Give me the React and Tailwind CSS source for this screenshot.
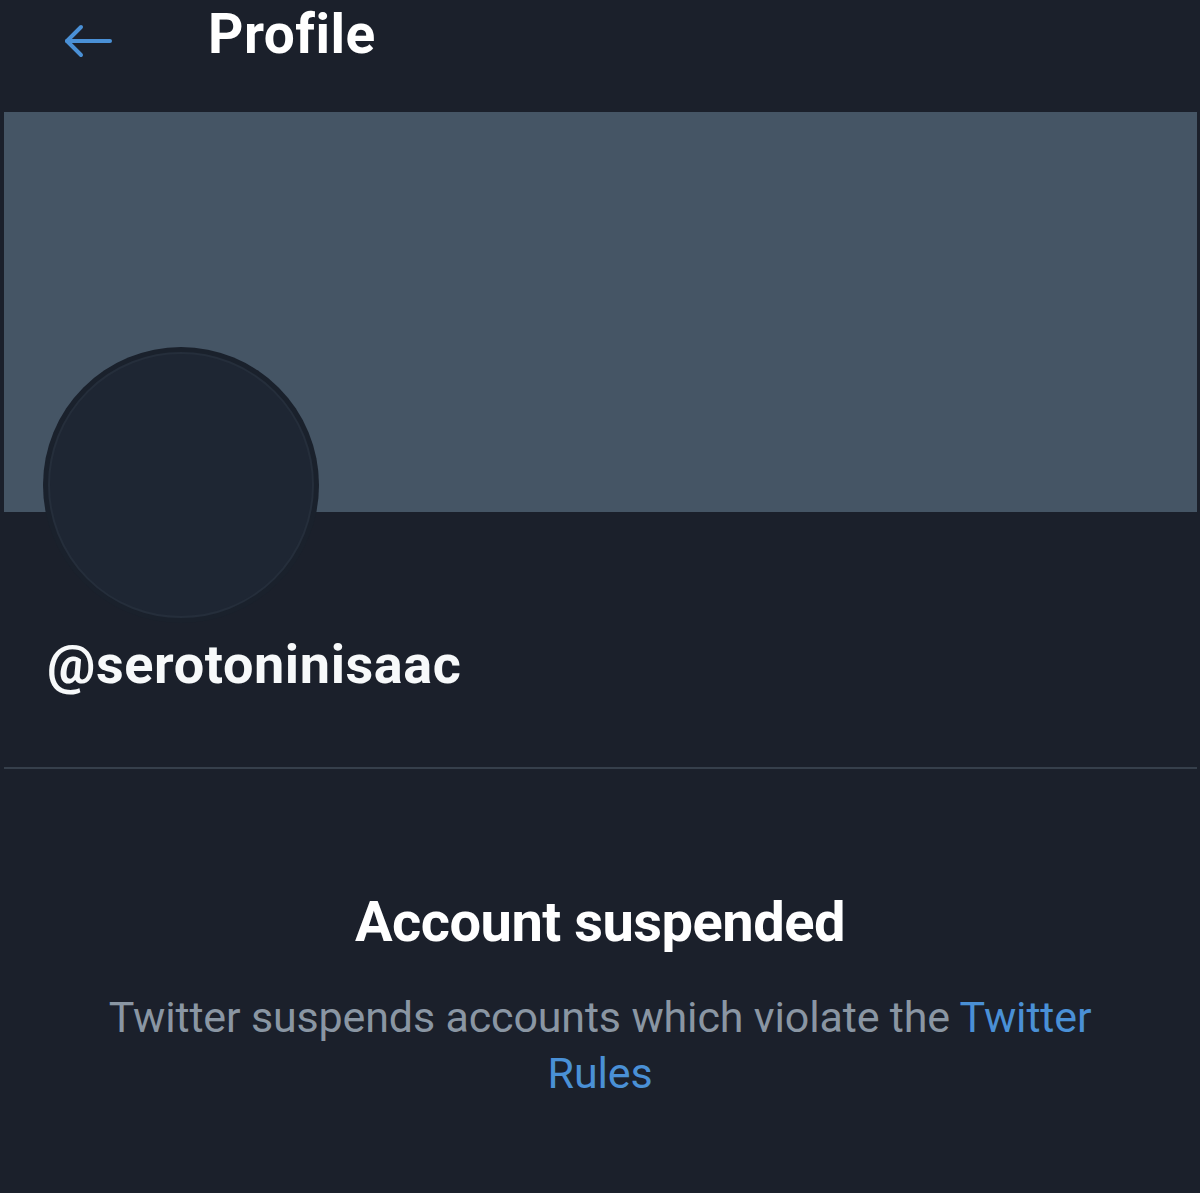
export default function App() {
  return (
    <div
      className="w-[1200px] h-[1193px] bg-[#1b202b] overflow-hidden"
      style={{ fontFamily: "Roboto, 'Liberation Sans', sans-serif" }}
    >
      <div className="h-[112px] flex items-start pt-[4px]">
        <svg
          className="ml-[63px] mt-[20px]"
          width="50"
          height="34"
          viewBox="0 0 50 34"
          fill="none"
          stroke="#4a90d6"
          strokeWidth="4"
          strokeLinecap="round"
          strokeLinejoin="round"
        >
          <path d="M47 17H4" />
          <path d="M18 3L4 17l14 14" />
        </svg>
        <div className="ml-[95px] text-[55px] leading-[60px] font-bold text-white tracking-[0.5px]">
          Profile
        </div>
      </div>
      <div className="ml-[4px] mr-[3px] h-[400px] bg-[#455565]" />
      <div className="-mt-[165px] ml-[43px] w-[276px] h-[276px] rounded-full bg-[#1a212c] p-[5px]">
        <div className="w-full h-full rounded-full bg-[#1e2633] border-2 border-[#252e3b]" />
      </div>
      <div className="ml-[47px] mt-[12px] text-[54px] leading-[60px] font-bold text-[#f7f9fa] tracking-[0.6px]">
        @serotoninisaac
      </div>
      <div className="mt-[72px] ml-[4px] mr-[3px] h-[2px] bg-[#363f4b]" />
      <div className="mt-[121px] text-center text-[56px] leading-[64px] font-bold text-white tracking-[-0.5px]">
        Account suspended
      </div>
      <div className="mt-[35px] mx-auto w-[1020px] text-center text-[43px] leading-[56px] text-[#8a96a3] tracking-[-0.15px]">
        Twitter suspends accounts which violate the{" "}
        <span className="text-[#4a90d6]">Twitter Rules</span>
      </div>
    </div>
  );
}
